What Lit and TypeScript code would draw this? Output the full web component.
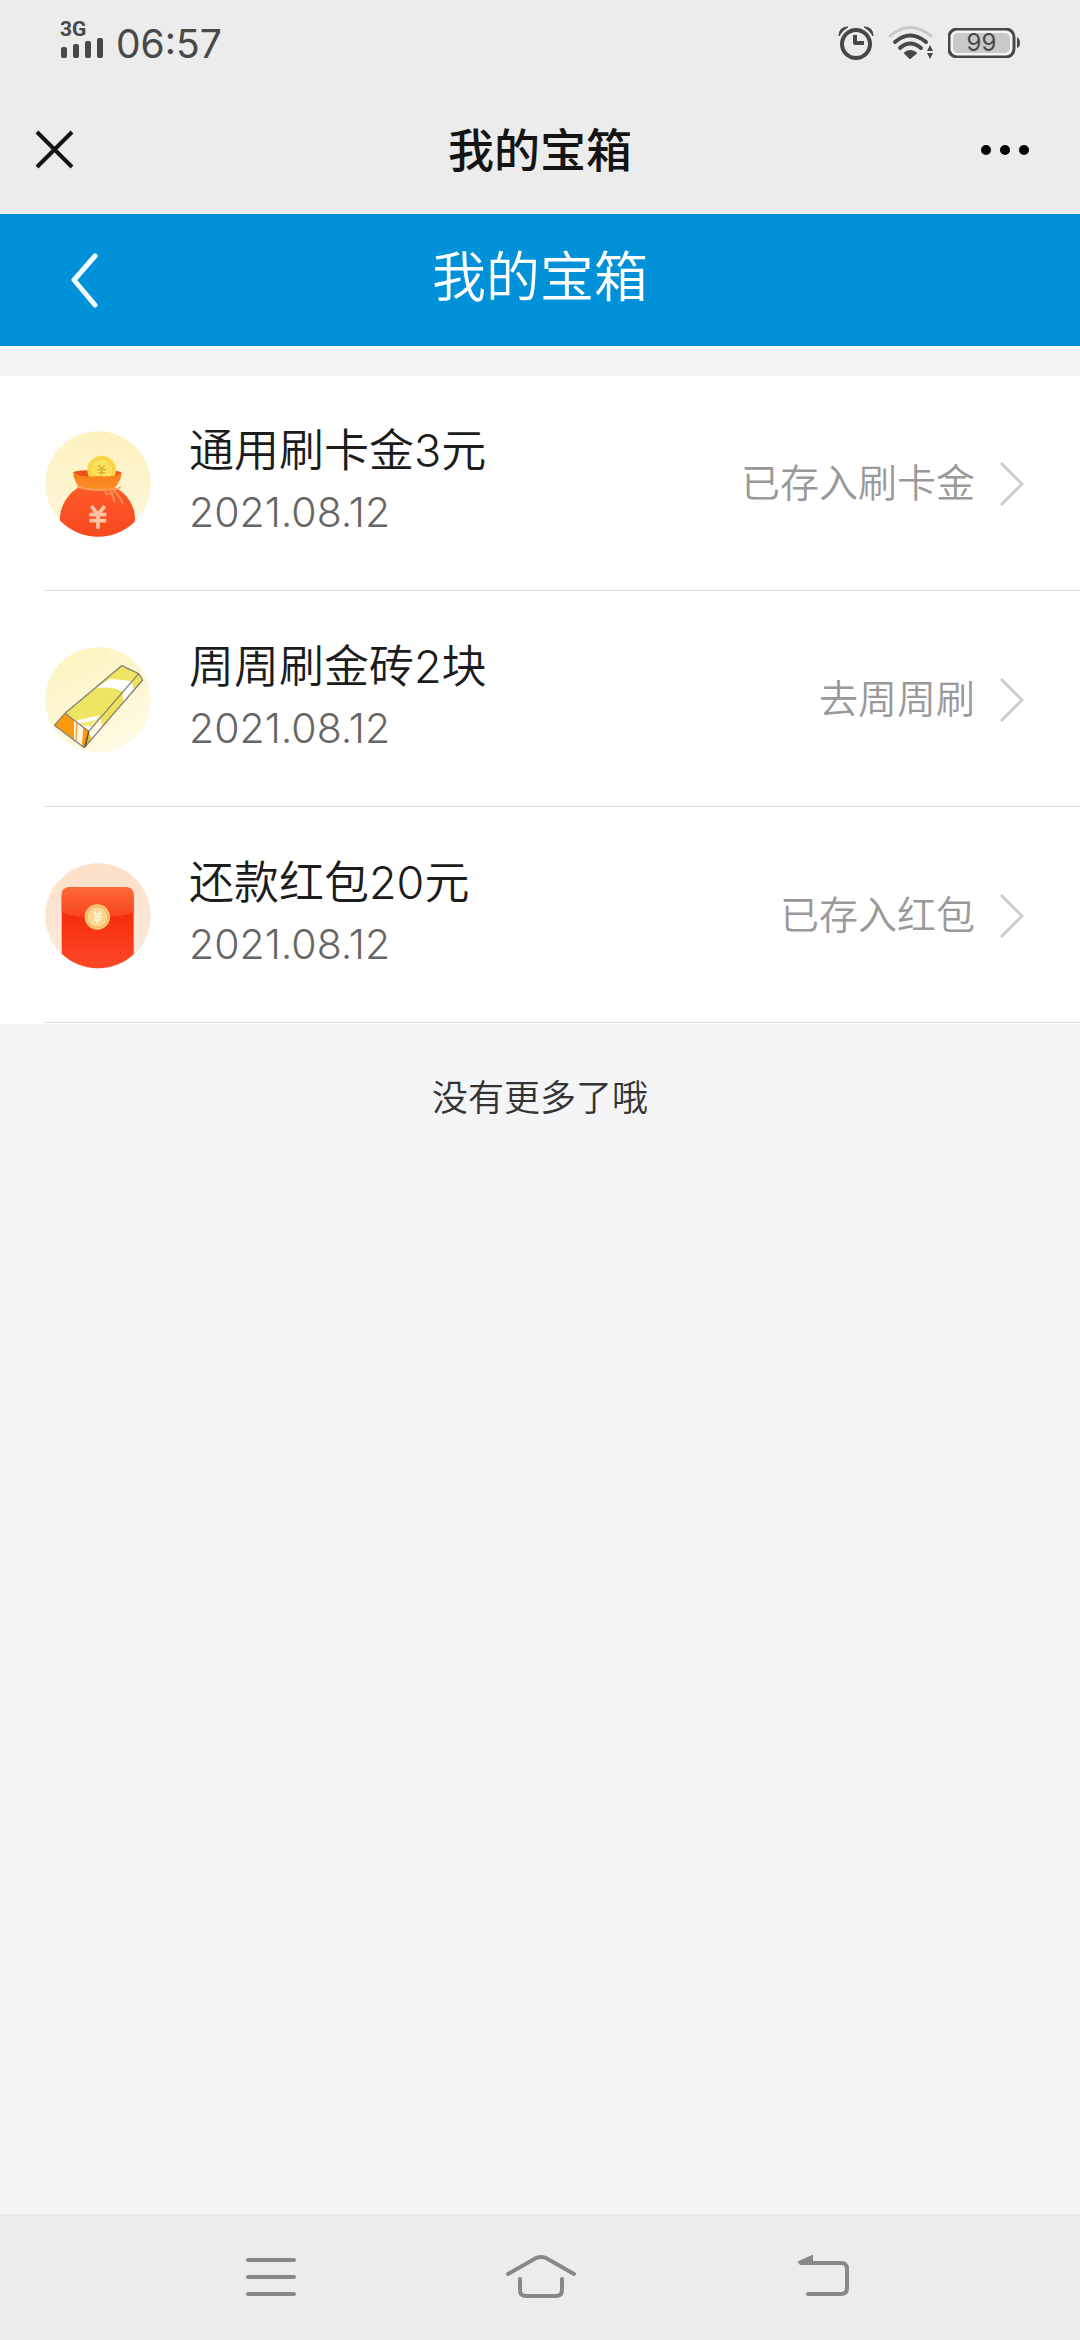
import { LitElement, html, css, svg } from "lit";
import { customElement, property } from "lit/decorators.js";

type IconName = "bag" | "gold" | "packet";

interface Reward {
  icon: IconName;
  title: string;
  date: string;
  status: string;
}

const REWARDS: Reward[] = [
  { icon: "bag", title: "通用刷卡金3元", date: "2021.08.12", status: "已存入刷卡金" },
  { icon: "gold", title: "周周刷金砖2块", date: "2021.08.12", status: "去周周刷" },
  { icon: "packet", title: "还款红包20元", date: "2021.08.12", status: "已存入红包" },
];

const bagIcon = html`<svg viewBox="45 63 318 318" aria-hidden="true">
  <defs>
    <linearGradient id="bag-bg" x1="0" y1="0" x2="0" y2="1">
      <stop offset="0" stop-color="#fdf2bf" />
      <stop offset="1" stop-color="#fdf6dc" />
    </linearGradient>
    <linearGradient id="bag-body" x1="0" y1="0" x2="0" y2="1">
      <stop offset="0" stop-color="#fb5a28" />
      <stop offset="1" stop-color="#f8481f" />
    </linearGradient>
    <linearGradient id="bag-rim" x1="0" y1="0" x2="0" y2="1">
      <stop offset="0" stop-color="#fb7a1e" />
      <stop offset="1" stop-color="#fb8f22" />
    </linearGradient>
    <clipPath id="bag-clip"><circle cx="204" cy="222" r="158" /></clipPath>
  </defs>
  <circle cx="204" cy="222" r="158" fill="url(#bag-bg)" />
  <g clip-path="url(#bag-clip)">
    <path d="M146 232 C112 252 88 292 90 332 C92 356 140 382 204 382 C268 382 314 356 315 330 C316 292 294 254 262 236 Z" fill="url(#bag-body)" />
  </g>
  <path d="M130 186 Q150 178 204 182 Q256 178 274 187 L270 200 L140 204 Z" fill="#e9531b" />
  <circle cx="215" cy="180" r="43" fill="#fbd84a" />
  <circle cx="215" cy="180" r="34" fill="#fbe05c" stroke="#f7cf3a" stroke-width="3" />
  <path d="M206 165 L215 177 L225 166 M202 179 H229 M205 188 H226 M215 177 V195" fill="none" stroke="#d8a83a" stroke-width="4" />
  <path d="M130 186 C146 202 180 200 206 199 C232 200 262 200 274 187 C276 206 262 224 254 236 C220 244 170 240 148 230 C138 222 130 204 130 186 Z" fill="url(#bag-rim)" />
  <path d="M143 230 Q190 244 246 238 Q262 240 270 232" fill="none" stroke="#fb9d62" stroke-width="6" stroke-linecap="round" />
  <path d="M236 240 Q224 240 228 252 Q238 256 244 244 Q248 260 254 274 M252 242 Q270 258 278 280" fill="none" stroke="#fa8a54" stroke-width="6" stroke-linecap="round" />
  <path d="M184 288 L204 314 L224 288 M178 314 H229 M178 332 H229 M204 312 V356" fill="none" stroke="#fdc4a4" stroke-width="11" />
</svg>`;

const goldIcon = html`<svg viewBox="45 51 318 318" aria-hidden="true">
  <defs>
    <linearGradient id="gold-bg" x1="0.1" y1="0" x2="0.6" y2="1">
      <stop offset="0" stop-color="#fdf3bd" />
      <stop offset="1" stop-color="#fffae4" />
    </linearGradient>
    <clipPath id="gold-top"><path d="M105 250 L275 107 L326 131 L176 304 Z" /></clipPath>
    <clipPath id="gold-side"><path d="M176 304 L326 131 L338 150 L163 353 Z" /></clipPath>
    <clipPath id="gold-front"><path d="M105 250 L176 304 L163 353 L73 286 Z" /></clipPath>
  </defs>
  <circle cx="204" cy="210" r="158" fill="url(#gold-bg)" />
  <g clip-path="url(#gold-top)">
    <path d="M100 240 L270 100 L330 130 L170 310 Z" fill="#eee562" />
    <path d="M240 146 Q280 150 308 154 L280 186 Q240 166 196 176 Z" fill="#fff" />
    <path d="M134 272 Q170 266 208 256 L174 306 Z" fill="#fff" />
    <path d="M146 280 Q172 276 196 270 L182 290 Q166 288 152 286 Z" fill="#f3e978" />
  </g>
  <g clip-path="url(#gold-side)">
    <path d="M160 290 L330 120 L345 150 L160 360 Z" fill="#eee15a" />
    <path d="M278 184 L306 156 L312 184 L280 220 Z" fill="#fff" />
    <path d="M176 304 L212 262 L216 292 L163 353 Z" fill="#fffbe6" />
    <path d="M176 304 L184 326 L163 353 Z" fill="#eebc38" />
  </g>
  <g clip-path="url(#gold-front)">
    <path d="M70 240 H180 V360 H70 Z" fill="#fff6e2" />
    <path d="M105 250 L132 270 L132 328 L70 286 Z" fill="#fb9b0c" />
    <path d="M138 275 L143 279 L140 336 L136 333 Z" fill="#f9ac3c" />
    <path d="M160 290 L176 304 L163 353 L156 346 Z" fill="#fb9b0c" />
  </g>
  <path d="M105 250 L275 107 L326 131 L176 304 Z M326 131 L338 150 L163 353 L73 286 L105 250 M176 304 L163 353" fill="none" stroke="#85807a" stroke-width="4" stroke-linejoin="round" />
  <path d="M176 304 L166 350" stroke="#6a4a1c" stroke-width="4" />
</svg>`;

const packetIcon = html`<svg viewBox="45 54 318 318" aria-hidden="true">
  <defs>
    <linearGradient id="pk-bg" x1="0" y1="0" x2="0" y2="1">
      <stop offset="0" stop-color="#fde0c8" />
      <stop offset="1" stop-color="#fdeadb" />
    </linearGradient>
    <linearGradient id="pk-body" x1="0" y1="0" x2="0" y2="1">
      <stop offset="0.3" stop-color="#f52c0c" />
      <stop offset="1" stop-color="#fd4a28" />
    </linearGradient>
    <linearGradient id="pk-flap" x1="0" y1="0" x2="0" y2="1">
      <stop offset="0" stop-color="#fd6a36" />
      <stop offset="1" stop-color="#f9431f" />
    </linearGradient>
    <clipPath id="pk-clip"><circle cx="204" cy="213" r="157" /></clipPath>
  </defs>
  <circle cx="204" cy="213" r="158" fill="url(#pk-bg)" />
  <g clip-path="url(#pk-clip)">
    <path d="M95 152 Q95 127 120 127 H286 Q311 127 311 152 V380 H95 Z" fill="url(#pk-body)" />
  </g>
  <path d="M95 152 Q95 127 120 127 H286 Q311 127 311 152 V204 Q204 232 95 204 Z" fill="url(#pk-flap)" />
  <circle cx="202" cy="216" r="38" fill="#f9c777" />
  <circle cx="202" cy="216" r="31" fill="#fbd78f" stroke="#f2b45a" stroke-width="3" />
  <path d="M191 199 L202 213 L213 199 M190 215 H214 M190 224 H214 M202 212 V236" fill="none" stroke="#fff2d2" stroke-width="6" />
</svg>`;

const ICONS = { bag: bagIcon, gold: goldIcon, packet: packetIcon };

@customElement("reward-row")
export class RewardRow extends LitElement {
  @property({ attribute: false }) reward!: Reward;

  static styles = css`
    :host {
      display: block;
      padding: 0 0 1px 45px;
    }
    .row {
      display: flex;
      align-items: center;
      padding: 44px 56px 42px 0;
      border-bottom: 1px solid #dedede;
      color: inherit;
      text-decoration: none;
    }
    .icon {
      flex: none;
      width: 106px;
      height: 106px;
      margin-right: 38px;
    }
    .icon svg {
      display: block;
      width: 100%;
      height: 100%;
    }
    .info {
      flex: 1;
      min-width: 0;
      padding-bottom: 6px;
    }
    .title {
      margin: 0;
      font-size: 45px;
      font-weight: 350;
      line-height: 62px;
      color: #1c1c1c;
    }
    .date {
      display: block;
      font-size: 41px;
      line-height: 60px;
      color: #666;
    }
    .status {
      margin: 0 23px 0 20px;
      padding-bottom: 2px;
      font-size: 39px;
      line-height: 56px;
      color: #999;
    }
    .chevron {
      flex: none;
      width: 26px;
      height: 50px;
    }
  `;

  render() {
    const r = this.reward;
    return html`<a class="row" href="#">
      <span class="icon">${ICONS[r.icon]}</span>
      <div class="info">
        <h2 class="title">${r.title}</h2>
        <time class="date">${r.date}</time>
      </div>
      <span class="status">${r.status}</span>
      <svg class="chevron" viewBox="0 0 26 50" fill="none" stroke="#ccc" stroke-width="3" aria-hidden="true">
        <path d="M3 4 L24 25 L3 46" />
      </svg>
    </a>`;
  }
}

@customElement("app-root")
export class AppRoot extends LitElement {
  static styles = css`
    :host {
      display: flex;
      flex-direction: column;
      min-height: 100vh;
      background: #f4f5f7;
      font-family: Inter, "Noto Sans CJK SC", sans-serif;
      font-weight: 350;
    }
    button {
      display: block;
      padding: 0;
      border: 0;
      background: none;
      color: inherit;
      font: inherit;
    }
    svg {
      display: block;
    }
    .system {
      display: flex;
      align-items: center;
      justify-content: space-between;
      height: 86px;
      padding: 0 60px;
      background: #ececec;
      color: #484848;
      font-weight: 400;
    }
    .left,
    .right {
      display: flex;
      align-items: center;
    }
    .left {
      gap: 12px;
    }
    .right {
      gap: 13px;
    }
    .cell {
      padding-bottom: 7px;
    }
    .network {
      font-family: Roboto, sans-serif;
      font-size: 21px;
      font-weight: 700;
      line-height: 15px;
    }
    .clock {
      font-size: 39px;
      line-height: 48px;
      padding-top: 2px;
    }
    .battery {
      display: grid;
      align-items: center;
    }
    .battery > * {
      grid-area: 1 / 1;
    }
    .level {
      width: 67px;
      text-align: center;
      font-size: 24px;
      line-height: 30px;
    }
    .titlebar,
    .pagebar {
      display: grid;
      grid-template-columns: 120px 1fr 120px;
      align-items: center;
    }
    .titlebar {
      height: 128px;
      background: #ececec;
      color: #141414;
    }
    .apptitle {
      text-align: center;
      font-size: 46px;
      font-weight: 500;
      line-height: 64px;
    }
    .close {
      padding-left: 34px;
    }
    .more {
      justify-self: end;
      padding-right: 48px;
    }
    .pagebar {
      height: 132px;
      background: #0091d8;
      color: #fff;
    }
    .pagebar h1 {
      margin: 0;
      padding-bottom: 4px;
      text-align: center;
      font-size: 54px;
      font-weight: 350;
      line-height: 76px;
    }
    .back {
      padding-left: 67px;
    }
    .content {
      flex: 1;
      padding-top: 30px;
    }
    .list {
      list-style: none;
      margin: 0;
      padding: 0;
      background: #fff;
    }
    .end {
      margin: 0;
      padding: 48px 0;
      text-align: center;
      font-size: 36px;
      line-height: 52px;
      color: #333;
    }
    .nav {
      display: grid;
      grid-template-columns: repeat(3, 1fr);
      justify-items: center;
      align-items: center;
      height: 126px;
      padding: 0 12.5%;
      background: #ececec;
    }
  `;

  render() {
    return html`
      <header>
        <div class="system">
          <div class="left">
            <div class="cell">
              <div class="network">3G</div>
              ${this.signal()}
            </div>
            <time class="clock">06:57</time>
          </div>
          <div class="right">${this.alarm()} ${this.wifi()} ${this.battery()}</div>
        </div>
        <div class="titlebar">
          <button class="close" aria-label="关闭">
            <svg width="41" height="41" viewBox="0 0 41 41" stroke="#141414" stroke-width="4">
              <path d="M3 2 L38 37 M38 2 L3 37" />
            </svg>
          </button>
          <div class="apptitle">我的宝箱</div>
          <button class="more" aria-label="更多">
            <svg width="52" height="12" viewBox="0 0 52 12" fill="#000">
              <circle cx="6" cy="6" r="5" />
              <circle cx="25" cy="6" r="5" />
              <circle cx="44" cy="6" r="5" />
            </svg>
          </button>
        </div>
      </header>
      <div class="pagebar">
        <button class="back" aria-label="返回">
          <svg width="34" height="60" viewBox="0 0 34 60" fill="none" stroke="#f4fdff" stroke-width="5" stroke-linecap="round" stroke-linejoin="round">
            <path d="M28 6 L7 30 L28 55" />
          </svg>
        </button>
        <h1>我的宝箱</h1>
      </div>
      <main class="content">
        <ul class="list">
          ${REWARDS.map((r) => html`<li><reward-row .reward=${r}></reward-row></li>`)}
        </ul>
        <p class="end">没有更多了哦</p>
      </main>
      <nav class="nav">
        ${this.navButton("任务", svg`<path d="M23 13 H69 M23 30 H69 M23 47 H69" />`)}
        ${this.navButton(
          "主页",
          svg`<path d="M13 27 L41 11 Q46 9 51 11 L79 27" />
            <path d="M25 32 V43 Q25 49 31 49 H61 Q67 49 67 43 V32" />`,
        )}
        ${this.navButton(
          "返回上一级",
          svg`<path d="M36 16 H76 Q82 16 82 22 V41 Q82 47 76 47 H43" />
            <path d="M34 15 L47 9 V16 H35 Z" fill="#888" stroke-width="2" />`,
        )}
      </nav>
    `;
  }

  private navButton(label: string, shape: unknown) {
    return html`<button aria-label=${label}>
      <svg width="90" height="60" viewBox="0 0 90 60" fill="none" stroke="#888" stroke-width="4" stroke-linecap="round">
        ${shape}
      </svg>
    </button>`;
  }

  private signal() {
    return html`<svg width="44" height="21" viewBox="0 0 44 21" fill="#484848" aria-hidden="true">
      <rect x="1" y="10" width="6" height="11" rx="2" />
      <rect x="13" y="7" width="6" height="14" rx="2" />
      <rect x="25" y="4" width="6" height="17" rx="2" />
      <rect x="37" y="1" width="6" height="20" rx="2" />
    </svg>`;
  }

  private alarm() {
    return html`<svg width="36" height="36" viewBox="0 0 36 36" fill="none" stroke="#484848" aria-hidden="true">
      <circle cx="18" cy="19" r="14" stroke-width="4" />
      <path d="M17 10 V18 H26" stroke-width="4" stroke-linejoin="round" />
      <path d="M1 11 Q1 2 10 2 Q4 5 1 11 Z M35 11 Q35 2 26 2 Q32 5 35 11 Z" fill="#484848" stroke-width="1" />
    </svg>`;
  }

  private wifi() {
    return html`<svg width="48" height="36" viewBox="0 0 48 36" fill="none" stroke="#484848" stroke-width="4" stroke-linecap="round" aria-hidden="true">
      <path d="M3 11 Q23 -6 44 11" stroke="#cacaca" stroke-width="3" />
      <path d="M8 17 Q23 4 39 17" />
      <path d="M13 23 Q23 14 34 23" />
      <path d="M23 33 L18 28 Q23 24 29 28 Z" fill="#484848" stroke-width="2" stroke-linejoin="round" />
      <path d="M43 20 L46 26 H40 Z M43 34 L46 28 H40 Z" fill="#484848" stroke="none" />
    </svg>`;
  }

  private battery() {
    return html`<div class="battery">
      <svg width="72" height="30" viewBox="0 0 72 30" aria-hidden="true">
        <rect x="1" y="1" width="65" height="28" rx="8" fill="#f4f4f4" stroke="#484848" stroke-width="3" />
        <rect x="5" y="5" width="57" height="20" rx="5" fill="#c9c9c9" />
        <path d="M69 9 Q72 11 72 15 Q72 19 69 20 Z" fill="#484848" />
      </svg>
      <span class="level">99</span>
    </div>`;
  }
}
